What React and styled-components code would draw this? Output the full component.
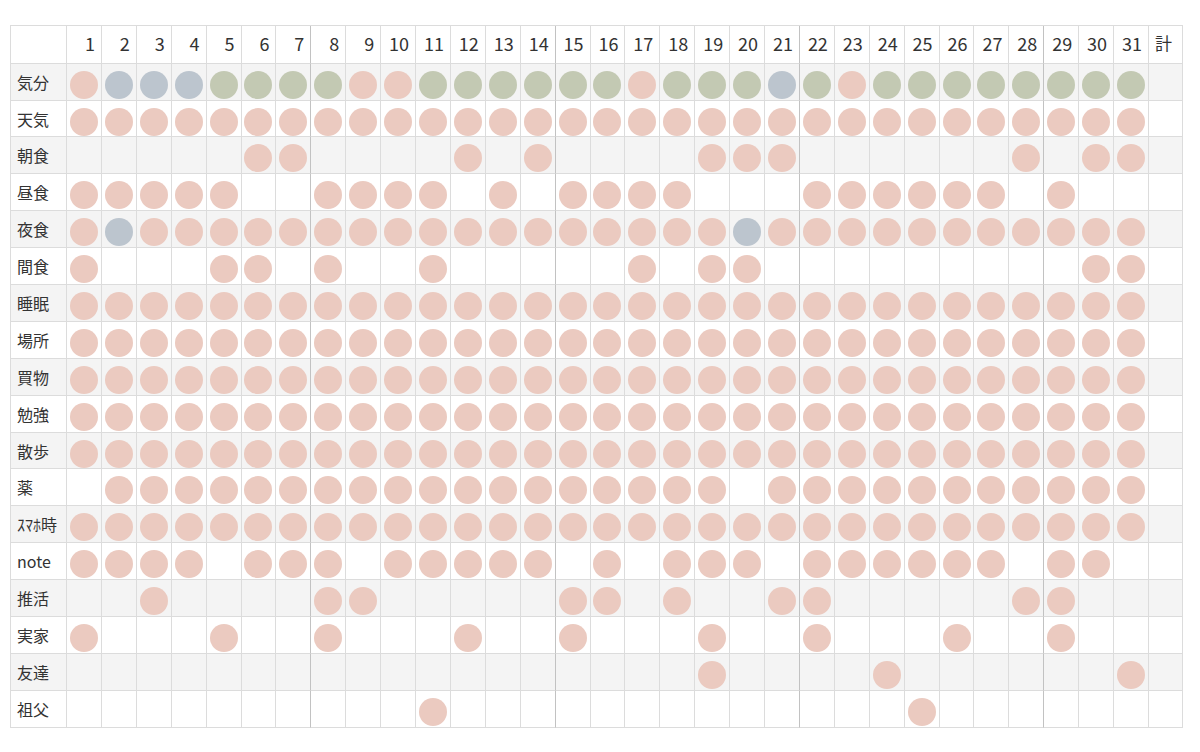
import React from "react";
import styled, { createGlobalStyle } from "styled-components";

const GlobalStyle = createGlobalStyle`
  html, body { margin: 0; padding: 0; background: #ffffff; }
  body { font-family: "Noto Sans CJK JP", "Liberation Sans", sans-serif; color: #333; }
`;

const COLORS = {
  p: "#ebcac0",
  b: "#bcc5ce",
  g: "#c3c9b3",
};

const all = (c = "p") => c.repeat(31);
const fromDays = (days, c = "p") =>
  Array.from({ length: 31 }, (_, i) => (days.includes(i + 1) ? c : ".")).join("");
const except = (days, extra = {}) =>
  Array.from({ length: 31 }, (_, i) =>
    extra[i + 1] ? extra[i + 1] : days.includes(i + 1) ? "." : "p"
  ).join("");

const ROWS = [
  { label: "気分", data: "pbbbgggg" + "pp" + "gggggg" + "p" + "ggg" + "b" + "g" + "p" + "gggggggg" },
  { label: "天気", data: all() },
  { label: "朝食", data: fromDays([6, 7, 12, 14, 19, 20, 21, 28, 30, 31]) },
  { label: "昼食", data: fromDays([1, 2, 3, 4, 5, 8, 9, 10, 11, 13, 15, 16, 17, 18, 22, 23, 24, 25, 26, 27, 29]) },
  { label: "夜食", data: except([], { 2: "b", 20: "b" }) },
  { label: "間食", data: fromDays([1, 5, 6, 8, 11, 17, 19, 20, 30, 31]) },
  { label: "睡眠", data: all() },
  { label: "場所", data: all() },
  { label: "買物", data: all() },
  { label: "勉強", data: all() },
  { label: "散歩", data: all() },
  { label: "薬", data: except([1, 20]) },
  { label: "ｽﾏﾎ時", data: all() },
  { label: "note", data: fromDays([1, 2, 3, 4, 6, 7, 8, 10, 11, 12, 13, 14, 16, 18, 19, 20, 22, 23, 24, 25, 26, 27, 29, 30]) },
  { label: "推活", data: fromDays([3, 8, 9, 15, 16, 18, 21, 22, 28, 29]) },
  { label: "実家", data: fromDays([1, 5, 8, 12, 15, 19, 22, 26, 29]) },
  { label: "友達", data: fromDays([19, 24, 31]) },
  { label: "祖父", data: fromDays([11, 25]) },
];

const Page = styled.div`
  padding: 25px 0 0 10px;
`;

const Table = styled.div`
  width: 1173px;
  border-top: 1px solid #dcdcdc;
  border-left: 1px solid #dcdcdc;
  box-sizing: border-box;
`;

const Row = styled.div`
  display: grid;
  grid-template-columns: 56px repeat(31, 1fr) 34px;
  height: ${(p) => (p.$header ? "37.7px" : "36.9px")};
  background: ${(p) => (p.$striped ? "#f4f4f4" : "#ffffff")};
`;

const Cell = styled.div`
  box-sizing: border-box;
  border-right: 1px solid ${(p) => (p.$weekEnd ? "#c2c2c2" : "#dcdcdc")};
  border-bottom: 1px solid #dcdcdc;
  display: flex;
  align-items: center;
  min-width: 0;
`;

const LabelCell = styled(Cell)`
  padding-left: 6px;
  font-family: "Noto Sans CJK JP", sans-serif;
  font-size: 16px;
  color: #333;
  white-space: nowrap;
`;

const DayHead = styled(Cell)`
  justify-content: flex-end;
  padding-right: 6px;
  padding-bottom: 3px;
  font-family: "Noto Sans CJK JP", sans-serif;
  font-size: 18px;
  color: #333;
`;

const TotalHead = styled(Cell)`
  padding-left: 6px;
  padding-bottom: 3px;
  font-size: 17px;
  color: #333;
  font-family: "Noto Sans CJK JP", sans-serif;
`;

const DotCell = styled(Cell)`
  justify-content: center;
  padding-top: 6px;
`;

const Dot = styled.span`
  display: block;
  width: 28px;
  height: 28px;
  border-radius: 50%;
  background: ${(p) => COLORS[p.$c]};
`;

const days = Array.from({ length: 31 }, (_, i) => i + 1);
const isWeekEnd = (d) => d % 7 === 0 && d < 31;

export default function App() {
  return (
    <>
      <GlobalStyle />
      <Page>
        <Table>
          <Row $header>
            <LabelCell />
            {days.map((d) => (
              <DayHead key={d} $weekEnd={isWeekEnd(d)}>
                {d}
              </DayHead>
            ))}
            <TotalHead>計</TotalHead>
          </Row>
          {ROWS.map((row, ri) => (
            <Row key={row.label} $striped={ri % 2 === 0}>
              <LabelCell>{row.label}</LabelCell>
              {days.map((d) => {
                const c = row.data[d - 1];
                return (
                  <DotCell key={d} $weekEnd={isWeekEnd(d)}>
                    {c !== "." && <Dot $c={c} />}
                  </DotCell>
                );
              })}
              <Cell />
            </Row>
          ))}
        </Table>
      </Page>
    </>
  );
}
